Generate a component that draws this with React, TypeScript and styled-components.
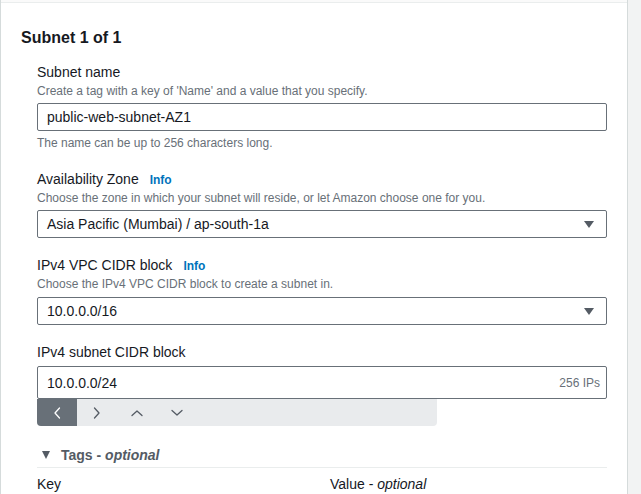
import React from "react";
import styled, { createGlobalStyle } from "styled-components";

const Global = createGlobalStyle`
  html, body { margin: 0; padding: 0; background: #ffffff; }
  body { font-family: "Liberation Sans", Arial, sans-serif; color: #16191f; }
  * { box-sizing: border-box; }
`;

const Page = styled.div`
  display: flex;
  width: 641px;
  height: 494px;
  overflow: hidden;
`;

const Main = styled.div`
  width: 628px;
  flex: none;
  display: flex;
  flex-direction: column;
  background: #ffffff;
  border-left: 1px solid #d5dbdb;
  border-right: 1px solid #d5dbdb;
`;

const Gutter = styled.div`
  flex: 1;
  background: #f2f3f3;
`;

const TopStrip = styled.div`
  height: 7px;
  background: #fafafa;
  border-bottom: 1px solid #eaeded;
`;

const Panel = styled.div`
  padding: 25px 20px 0 20px;
`;

const Heading = styled.h2`
  margin: 0;
  font-size: 16px;
  line-height: 20px;
  font-weight: 700;
  color: #16191f;
`;

const Form = styled.div`
  margin-top: 14px;
  padding-left: 16px;
  display: flex;
  flex-direction: column;
`;

const Field = styled.div<{ $gap?: number }>`
  display: flex;
  flex-direction: column;
  margin-top: ${(p) => p.$gap ?? 0}px;
`;

const Label = styled.div`
  font-size: 14px;
  line-height: 20px;
  color: #16191f;
  display: flex;
  align-items: baseline;
`;

const Info = styled.span`
  margin-left: 11px;
  font-size: 12px;
  font-weight: 700;
  color: #0073bb;
`;

const Hint = styled.div<{ $top?: number }>`
  margin-top: ${(p) => p.$top ?? 0}px;
  font-size: 12px;
  line-height: 16px;
  color: #687078;
`;

const Box = styled.div<{ $h?: number; $top?: number }>`
  margin-top: ${(p) => p.$top ?? 4}px;
  height: ${(p) => p.$h ?? 28}px;
  border: 1px solid #687078;
  border-radius: 2px;
  background: #ffffff;
  display: flex;
  align-items: center;
  justify-content: space-between;
  padding: 0 12px 0 9px;
  font-size: 14px;
  color: #16191f;
`;

const Suffix = styled.span`
  font-size: 12px;
  color: #687078;
  margin-right: -6px;
`;

const Caret = styled.span`
  width: 0;
  height: 0;
  border-left: 5px solid transparent;
  border-right: 5px solid transparent;
  border-top: 7px solid #545b64;
`;

const Toolbar = styled.div`
  width: 400px;
  height: 27px;
  background: #e9ebed;
  border-bottom-left-radius: 4px;
  border-bottom-right-radius: 4px;
  display: flex;
`;

const ToolButton = styled.div<{ $active?: boolean }>`
  width: 40px;
  height: 100%;
  display: flex;
  align-items: center;
  justify-content: center;
  background: ${(p) => (p.$active ? "#687078" : "transparent")};
  color: ${(p) => (p.$active ? "#ffffff" : "#545b64")};
  border-bottom-left-radius: ${(p) => (p.$active ? "4px" : "0")};
`;

const Section = styled.div`
  margin-top: 19px;
`;

const SectionHeader = styled.div`
  display: flex;
  align-items: center;
  height: 23px;
  padding-bottom: 3px;
  border-bottom: 1px solid #eaeded;
  font-size: 14px;
  font-weight: 700;
  color: #545b64;
`;

const SectionCaret = styled.span`
  width: 0;
  height: 0;
  margin: 0 11px 0 5px;
  border-left: 4px solid transparent;
  border-right: 4px solid transparent;
  border-top: 8px solid #545b64;
`;

const Em = styled.em`
  font-style: italic;
`;

const Columns = styled.div`
  margin-top: 6px;
  display: grid;
  grid-template-columns: 277px 1fr;
  column-gap: 16px;
  font-size: 14px;
  line-height: 20px;
  color: #16191f;
`;

const Chevron = ({ d }: { d: string }) => (
  <svg width="16" height="16" viewBox="0 0 16 16" fill="none" stroke="currentColor" strokeWidth="1.3" strokeLinecap="round" strokeLinejoin="round">
    <path d={d} />
  </svg>
);

export default function App() {
  return (
    <>
      <Global />
      <Page>
        <Main>
          <TopStrip />
          <Panel>
            <Heading>Subnet 1 of 1</Heading>
            <Form>
              <Field>
                <Label>Subnet name</Label>
                <Hint $top={1}>Create a tag with a key of 'Name' and a value that you specify.</Hint>
                <Box>public-web-subnet-AZ1</Box>
                <Hint $top={4}>The name can be up to 256 characters long.</Hint>
              </Field>
              <Field $gap={18}>
                <Label>
                  Availability Zone<Info>Info</Info>
                </Label>
                <Hint>Choose the zone in which your subnet will reside, or let Amazon choose one for you.</Hint>
                <Box>
                  Asia Pacific (Mumbai) / ap-south-1a
                  <Caret />
                </Box>
              </Field>
              <Field $gap={17}>
                <Label>
                  IPv4 VPC CIDR block<Info>Info</Info>
                </Label>
                <Hint>Choose the IPv4 VPC CIDR block to create a subnet in.</Hint>
                <Box $top={5}>
                  10.0.0.0/16
                  <Caret />
                </Box>
              </Field>
              <Field $gap={17}>
                <Label>IPv4 subnet CIDR block</Label>
                <Box $h={33} $top={4}>
                  10.0.0.0/24
                  <Suffix>256 IPs</Suffix>
                </Box>
                <Toolbar>
                  <ToolButton $active>
                    <Chevron d="M10.5 3 6 8l4.5 5" />
                  </ToolButton>
                  <ToolButton>
                    <Chevron d="M5.5 3 10 8l-4.5 5" />
                  </ToolButton>
                  <ToolButton>
                    <Chevron d="M3 10.5 8 6l5 4.5" />
                  </ToolButton>
                  <ToolButton>
                    <Chevron d="M3 5.5 8 10l5-4.5" />
                  </ToolButton>
                </Toolbar>
              </Field>
              <Section>
                <SectionHeader>
                  <SectionCaret />
                  Tags -&nbsp;<Em>optional</Em>
                </SectionHeader>
                <Columns>
                  <span>Key</span>
                  <span>
                    Value - <Em>optional</Em>
                  </span>
                </Columns>
              </Section>
            </Form>
          </Panel>
        </Main>
        <Gutter />
      </Page>
    </>
  );
}
